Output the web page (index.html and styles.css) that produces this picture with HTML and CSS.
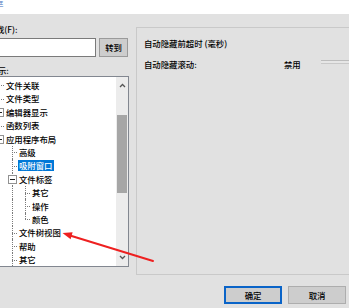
FILE: index.html
```html
<!DOCTYPE html>
<html>
<head>
<meta charset="utf-8">
<link rel="stylesheet" href="styles.css">
</head>
<body>
<div class="dialog">
  <div class="topbar"><span class="top-glyph">框</span></div>
  <div class="main">
    <div class="left">
      <div class="label find">找(F):</div>
      <div class="goto-row">
        <div class="input"></div>
        <button class="btn small">转到</button>
      </div>
      <div class="label cat">示:</div>
      <div class="tree">
        <div class="tree-list">
          <div class="row"><i class="g t"></i><span class="lbl">文件关联</span></div>
          <div class="row"><i class="g t"></i><span class="lbl">文件类型</span></div>
          <div class="row"><i class="g t"><b class="box plus"></b></i><span class="lbl">编辑器显示</span></div>
          <div class="row"><i class="g t"></i><span class="lbl">函数列表</span></div>
          <div class="row"><i class="g t"><b class="box"></b></i><span class="lbl">应用程序布局</span></div>
          <div class="row"><i class="g v"></i><i class="g t"></i><span class="lbl">高级</span></div>
          <div class="row sel"><i class="g v"></i><i class="g t"></i><span class="lbl">吸附窗口</span></div>
          <div class="row"><i class="g v"></i><i class="g t"><b class="box"></b></i><span class="lbl">文件标签</span></div>
          <div class="row"><i class="g v"></i><i class="g v"></i><i class="g t"></i><span class="lbl">其它</span></div>
          <div class="row"><i class="g v"></i><i class="g v"></i><i class="g t"></i><span class="lbl">操作</span></div>
          <div class="row"><i class="g v"></i><i class="g v"></i><i class="g l"></i><span class="lbl">颜色</span></div>
          <div class="row"><i class="g v"></i><i class="g t"></i><span class="lbl">文件树视图</span></div>
          <div class="row"><i class="g v"></i><i class="g t"></i><span class="lbl">帮助</span></div>
          <div class="row"><i class="g v"></i><i class="g t"></i><span class="lbl">其它</span></div>
        </div>
        <div class="vscroll">
          <div class="sb-arrow"><svg width="7" height="5" viewBox="0 0 7 5"><path d="M1 4 L3.5 1.5 L6 4" fill="none" stroke="#555" stroke-width="1.3"/></svg></div>
          <div class="sb-track"><div class="sb-thumb"></div></div>
          <div class="sb-arrow"><svg width="7" height="5" viewBox="0 0 7 5"><path d="M1 1 L3.5 3.5 L6 1" fill="none" stroke="#555" stroke-width="1.3"/></svg></div>
        </div>
      </div>
    </div>
    <div class="panel">
      <div class="p-row">自动隐藏前超时 (毫秒)</div>
      <div class="p-row two">
        <span class="p-label">自动隐藏滚动:</span>
        <span class="p-val">禁用</span>
        <span class="slider"></span>
      </div>
    </div>
  </div>
  <div class="footer">
    <button class="btn primary">确定</button>
    <button class="btn">取消</button>
  </div>
</div>
<svg class="annot" width="349" height="308" viewBox="0 0 349 308">
  <line x1="153" y1="261" x2="70" y2="235.5" stroke="#ee2020" stroke-width="2" stroke-linecap="round"/>
  <polygon points="62.5,233 72.6,232.2 70.6,239.2" fill="#ee2020"/>
</svg>
</body>
</html>
```

FILE: styles.css
```css
html, body {
  margin: 0;
  padding: 0;
}
body {
  width: 349px;
  height: 308px;
  overflow: hidden;
  position: relative;
  background: #e1e1e1;
  font-family: "Noto Sans CJK SC", "Noto Sans", sans-serif;
  font-size: 8.4px;
  font-weight: 500;
  color: #000;
}
.dialog {
  display: flex;
  flex-direction: column;
  height: 308px;
}
.topbar {
  height: 14px;
  flex: none;
  background: #fff;
  overflow: hidden;
}
.top-glyph {
  display: block;
  margin: -4px 0 0 -5px;
  line-height: 12px;
  color: #7d9bd0;
}
.main {
  display: flex;
  height: 261px;
  flex: none;
}
.left {
  width: 131px;
  flex: none;
  margin-left: -2px;
  display: flex;
  flex-direction: column;
}
.label {
  height: 12px;
  line-height: 12px;
  white-space: nowrap;
}
.find {
  margin-top: 9px;
  text-indent: -2px;
}
.cat {
  margin-top: 7px;
}
.goto-row {
  display: flex;
  height: 19px;
  margin-top: 3px;
}
.input {
  width: 98px;
  box-sizing: border-box;
  background: #fff;
  border: 1px solid #7a7a7a;
}
.btn {
  width: 58px;
  height: 18px;
  box-sizing: border-box;
  padding: 0;
  margin: 0;
  border: 1px solid #adadad;
  background: #cdcdcd;
  font: inherit;
  color: #000;
  line-height: 16px;
  text-align: center;
}
.btn.small {
  width: 29px;
  height: 19px;
  margin-left: 3px;
  line-height: 17px;
  border-color: #9a9a9a;
}
.btn.primary {
  border: 2px solid #0a64c8;
  line-height: 14px;
}
.tree {
  height: 191px;
  box-sizing: border-box;
  border: 1px solid #828790;
  background: #fff;
  display: flex;
}
.tree-list {
  flex: 1;
  overflow: hidden;
  padding-top: 1.8px;
}
.row {
  display: flex;
  height: 13.4px;
  margin-left: -6px;
  white-space: nowrap;
}
.g {
  display: grid;
  grid-template-columns: 6px 7px;
  grid-template-rows: 1fr 1fr;
  width: 13px;
  flex: none;
}
.g.t::before,
.g.v::before {
  content: "";
  grid-column: 2;
  grid-row: 1 / 3;
  border-left: 1px dotted #7a7a7a;
}
.g.l::before {
  content: "";
  grid-column: 2;
  grid-row: 1;
  border-left: 1px dotted #7a7a7a;
}
.g.t::after,
.g.l::after {
  content: "";
  grid-column: 2;
  grid-row: 2;
  width: 5px;
  border-top: 1px dotted #7a7a7a;
}
.box {
  grid-column: 1 / 3;
  grid-row: 1 / 3;
  align-self: center;
  margin-left: 2px;
  width: 9px;
  height: 9px;
  box-sizing: border-box;
  border: 1px solid #919191;
  background: #fff;
  display: flex;
  align-items: center;
  justify-content: center;
  z-index: 1;
}
.box::before {
  content: "";
  width: 5px;
  height: 1px;
  background: #222;
}
.box.plus {
  background: linear-gradient(#222, #222) center / 1px 5px no-repeat, #fff;
}
.lbl {
  align-self: center;
  line-height: 11px;
  padding: 0 1px;
  margin-left: -1px;
}
.sel .lbl {
  background: #0078d7;
  color: #fff;
}
.vscroll {
  width: 12px;
  flex: none;
  background: #ececec;
  display: flex;
  flex-direction: column;
}
.sb-arrow {
  height: 17px;
  flex: none;
  display: flex;
  align-items: center;
  justify-content: center;
}
.sb-track {
  flex: 1;
}
.sb-thumb {
  margin: 21px 1px 0 1px;
  height: 78px;
  background: #a6a6a6;
}
.panel {
  flex: 1;
  height: 248px;
  box-sizing: border-box;
  margin: 13px -10px 0 7px;
  border: 1px solid #c9c9c9;
  padding: 9px 0 0 7px;
}
.p-row {
  height: 12px;
  line-height: 12px;
  white-space: nowrap;
}
.p-row.two {
  margin-top: 8.5px;
  display: flex;
  align-items: center;
}
.p-label {
  width: 140px;
  flex: none;
}
.p-val {
  width: 37px;
  flex: none;
}
.slider {
  flex: 1;
  height: 2px;
  margin-top: -3px;
  background: #e6e6e6;
  border-top: 1px solid #bcbcbc;
  border-bottom: 1px solid #c8c8c8;
}
.footer {
  display: flex;
  justify-content: flex-end;
  gap: 6px;
  padding: 11px 3px 0 0;
}
.annot {
  position: absolute;
  left: 0;
  top: 0;
  pointer-events: none;
}
```
